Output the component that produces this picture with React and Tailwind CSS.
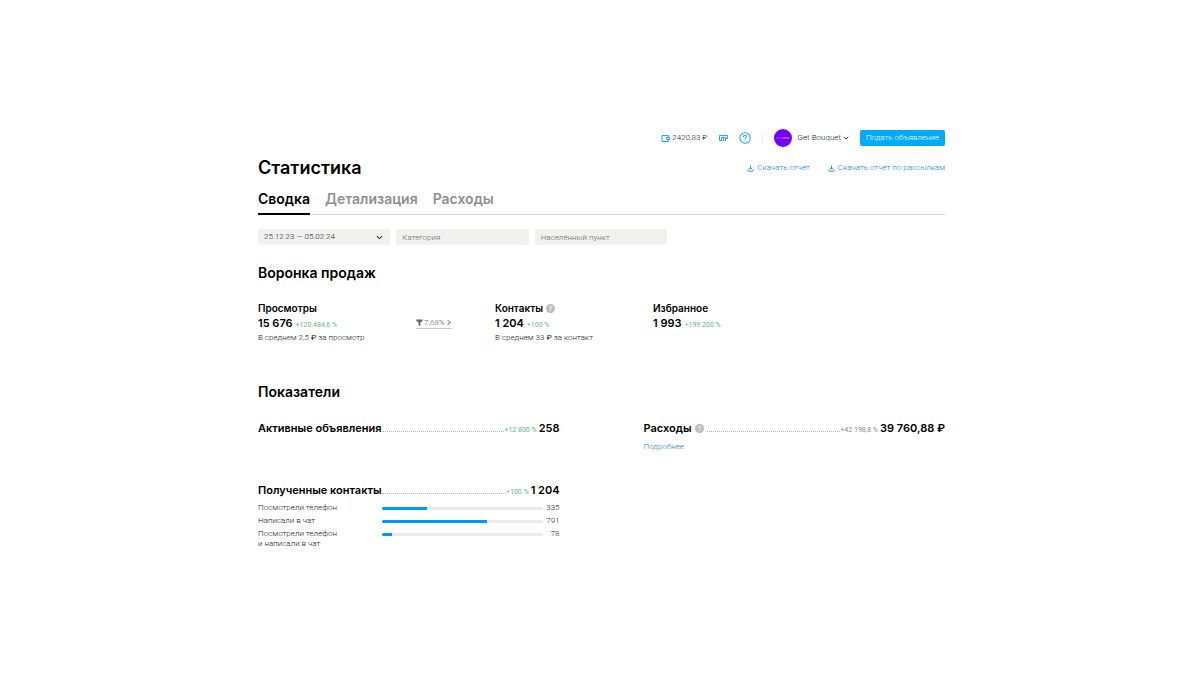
const tabs = [
    { name: "Сводка", active: true },
    { name: "Детализация", active: false },
    { name: "Расходы", active: false },
];

const contacts = [
    { label: "Посмотрели телефон", value: 335 },
    { label: "Написали в чат", value: 791 },
    { label: "Посмотрели телефон и написали в чат", value: 78 },
];

const WalletIcon = () => (
    <svg className="w-[9px] h-[9px]" viewBox="0 0 9 9" fill="none" stroke="#1fa9f5" strokeWidth="1">
        <path d="M7.5 3V1.5h-6.5v6h6.5V6" />
        <path d="M8.5 3.5H5.5v2h3z" />
    </svg>
);

const CartIcon = () => (
    <svg className="w-[9px] h-[8px]" viewBox="0 0 9 8" fill="none" stroke="#1fa9f5" strokeWidth="1">
        <path d="M8.5 4.5v-3h-8v5h2M2.5 7V3.5h4V7M4.5 3.5V7M6.5 4.5h2" />
    </svg>
);

const HelpIcon = () => (
    <svg className="w-[12px] h-[12px]" viewBox="0 0 12 12" fill="none" stroke="#1fa9f5" strokeWidth="1.1">
        <circle cx="6" cy="6" r="5.2" />
        <path d="M4.4 4.9C4.4 2.7 7.6 2.8 7.6 4.8C7.6 5.9 6 5.9 6 7.2M6 8.2v1" />
    </svg>
);

const HintIcon = () => (
    <svg className="w-[9px] h-[9px] shrink-0" viewBox="0 0 8 8" fill="none">
        <circle cx="4" cy="4" r="4" fill="#bdbdbd" />
        <path d="M2.9 3.2C2.9 1.7 5.1 1.7 5.1 3.1C5.1 3.9 4 3.9 4 4.8M4 5.4v.9" stroke="#fff" strokeWidth="0.8" />
    </svg>
);

const DownloadIcon = () => (
    <svg className="w-[7px] h-[7px]" viewBox="0 0 7 7" fill="none" stroke="#2b95e0" strokeWidth="1">
        <path d="M3.5 0.5v3.5M2 2.8l1.5 1.5L5 2.8M0.6 4.4Q0.6 6.2 2 6.2H5Q6.4 6.2 6.4 4.4" />
    </svg>
);

const FunnelIcon = () => (
    <svg className="w-[7px] h-[7px]" viewBox="0 0 7 7" fill="#6b6b6b">
        <path d="M0.2 0.5h6.6v1L4.4 3.7v3H2.6v-3L0.2 1.5z" />
    </svg>
);

const Chevron = ({ className }) => (
    <svg className={className} viewBox="0 0 8 5" fill="none" stroke="#333" strokeWidth="1.2">
        <path d="M1 1l3 2.8L7 1" />
    </svg>
);

const Metric = ({ title, change, value, hint, muted }) => (
    <div className="flex items-baseline h-4 leading-4">
        <h3 className="text-[11px] font-semibold flex items-center gap-[3px] whitespace-nowrap">
            {title}
            {hint && <HintIcon />}
        </h3>
        <span className={hint ? "flex-1 border-b border-dotted border-[#b5b5b5] ml-[3px]" : "flex-1 border-b border-dotted border-[#b5b5b5]"} />
        <span className={muted ? "text-[7px] font-['Roboto'] text-[#8a8a8a]" : "text-[7px] font-['Roboto'] text-[#5cb880]"}>{change}</span>
        <span className="text-[11px] font-semibold ml-[2px] whitespace-nowrap">{value}</span>
    </div>
);

const FunnelCard = ({ title, value, change, note, hint }) => (
    <div className="whitespace-nowrap">
        <h3 className="text-[10px] leading-4 font-semibold flex items-center gap-[3px]">
            {title}
            {hint && <HintIcon />}
        </h3>
        <p className="text-[11px] leading-[14px] font-semibold">
            {value}
            <span className="ml-[3px] text-[7px] font-['Roboto'] font-normal text-[#5cb880]">{change}</span>
        </p>
        {note && <p className="text-[8px] leading-3 font-['Roboto'] font-light text-[#222]">{note}</p>}
    </div>
);

const App = () => {
    return (
        <div className="min-h-screen bg-white text-black font-['Inter','Noto_Sans',sans-serif]">
            <div className="max-w-[690px] mx-auto pl-[3px] pt-[129px] pb-32">

                <header className="flex items-center justify-end h-[18px] text-[8px] font-['Roboto'] font-light text-[#222]">
                    <a href="#" className="flex items-center gap-[2px]">
                        <WalletIcon />
                        2420,83 ₽
                    </a>
                    <a href="#" aria-label="Корзина" className="ml-[11px]"><CartIcon /></a>
                    <a href="#" aria-label="Помощь" className="ml-[11px]"><HelpIcon /></a>
                    <span className="w-px h-3 bg-[#eee] ml-[11px]" />
                    <button type="button" className="flex items-center ml-[11px]">
                        <span className="w-[18px] h-[18px] rounded-full bg-[#7300ff] flex items-center justify-center">
                            <svg className="w-[14px] h-[2px]" viewBox="0 0 14 2" stroke="#d9bfff" strokeWidth="1">
                                <path d="M0 1h5" opacity="0.4" />
                                <path d="M6 1h8" strokeDasharray="1.6 0.4" />
                            </svg>
                        </span>
                        <span className="ml-[6px]">Get Bouquet</span>
                        <Chevron className="w-[6px] h-[4px] ml-[2px]" />
                    </button>
                    <button type="button" className="ml-[11px] h-4 w-[85px] rounded-[2px] bg-[#00aaff] text-white whitespace-nowrap">
                        Подать объявление
                    </button>
                </header>

                <div className="flex items-center justify-between mt-[9px]">
                    <h1 className="text-[18px] leading-6 font-semibold">Статистика</h1>
                    <div className="flex gap-[18px] text-[8px] font-['Roboto'] font-light text-[#1486d8]">
                        <a href="#" className="flex items-center gap-[3px]"><DownloadIcon />Скачать отчёт</a>
                        <a href="#" className="flex items-center gap-[3px]"><DownloadIcon />Скачать отчёт по рассылкам</a>
                    </div>
                </div>

                <nav className="flex gap-[15px] mt-[7px] border-b border-[#d6d6d6] text-[14px] leading-6 font-semibold">
                    {tabs.map((tab) => (
                        <a
                            key={tab.name}
                            href="#"
                            className={tab.active ? "pb-[2px] -mb-px border-b-2 border-black" : "pb-[2px] text-[#8f8f8f]"}
                        >
                            {tab.name}
                        </a>
                    ))}
                </nav>

                <div className="grid grid-cols-3 gap-[6px] max-w-[409px] mt-[14px] text-[8px] font-['Roboto'] font-light">
                    <div className="relative">
                        <select aria-label="Период" className="appearance-none block w-full h-4 pl-[6px] rounded-[2px] bg-[#f2f1f0] text-[#222]">
                            <option>25.12.23 — 05.02.24</option>
                        </select>
                        <Chevron className="absolute right-[7px] top-[6px] w-[7px] h-[5px] pointer-events-none" />
                    </div>
                    <input type="text" aria-label="Категория" placeholder="Категория" className="w-full h-4 px-[6px] rounded-[2px] bg-[#f2f1f0] placeholder:text-[#6a6a6a]" />
                    <input type="text" aria-label="Населённый пункт" placeholder="Населённый пункт" className="w-full h-4 px-[6px] rounded-[2px] bg-[#f2f1f0] placeholder:text-[#6a6a6a]" />
                </div>

                <section className="mt-[18px]">
                    <h2 className="text-[14px] leading-5 font-semibold">Воронка продаж</h2>
                    <div className="grid grid-cols-[158px_79px_158px_1fr] mt-[17px]">
                        <FunnelCard title="Просмотры" value="15 676" change="+120 484,6 %" note={<>В среднем 2,5 <b>₽</b> за просмотр</>} />
                        <div className="pt-[17px]">
                            <a href="#" className="flex w-fit items-center gap-px h-3 text-[8px] font-['Roboto'] font-light text-[#666] border-b border-[#c8c8c8]">
                                <FunnelIcon />
                                7,68%
                                <Chevron className="w-[6px] h-[5px] -rotate-90" />
                            </a>
                        </div>
                        <FunnelCard title="Контакты" value="1 204" change="+100 %" note={<>В среднем 33 <b>₽</b> за контакт</>} hint />
                        <FunnelCard title="Избранное" value="1 993" change="+199 200 %" />
                    </div>
                </section>

                <section className="mt-[38px]">
                    <h2 className="text-[14px] leading-5 font-semibold">Показатели</h2>
                    <div className="grid grid-cols-2 gap-x-[84px] mt-[18px]">
                        <div>
                            <Metric title="Активные объявления" change="+12 800 %" value="258" />
                            <div className="mt-[46px]">
                                <Metric title="Полученные контакты" change="+100 %" value="1 204" />
                                <ul className="mt-[5px] flex flex-col gap-[3px] text-[8px] leading-[10px] font-['Roboto'] font-light text-[#222]">
                                    {contacts.map((item) => (
                                        <li key={item.label} className="flex">
                                            <span className="w-[124px] pr-10">{item.label}</span>
                                            <span className="flex-1 h-[3px] mt-1 rounded-full bg-[#ebebeb] overflow-hidden">
                                                <span className="block h-full bg-[#0099f7]" style={{ width: `${(item.value / 1204) * 100}%` }} />
                                            </span>
                                            <span className="w-[17px] text-right">{item.value}</span>
                                        </li>
                                    ))}
                                </ul>
                            </div>
                        </div>
                        <div>
                            <Metric title="Расходы" change="+42 198,8 %" value="39 760,88 ₽" hint muted />
                            <a href="#" className="block mt-[6px] text-[8px] leading-[10px] font-['Roboto'] font-light text-[#1486d8]">Подробнее</a>
                        </div>
                    </div>
                </section>

            </div>
        </div>
    );
};

export default App;
